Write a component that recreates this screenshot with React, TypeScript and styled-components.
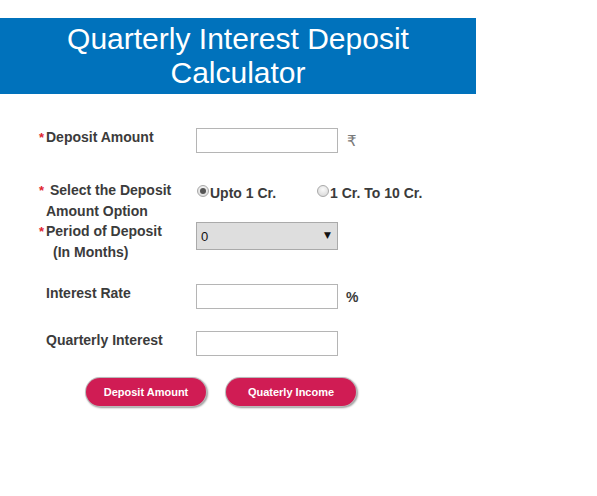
import styled, { createGlobalStyle } from "styled-components";

const GlobalStyle = createGlobalStyle`
  html, body {
    margin: 0;
    padding: 0;
    background: #fff;
    font-family: "Liberation Sans", Arial, sans-serif;
  }
`;

const Page = styled.div`
  width: 597px;
  height: 496px;
  padding-top: 18px;
  box-sizing: border-box;
`;

const Header = styled.h1`
  margin: 0;
  width: 476px;
  height: 76px;
  background: #0072bc;
  color: #fff;
  font-weight: normal;
  font-size: 30px;
  line-height: 34px;
  text-align: center;
  padding-top: 4px;
  box-sizing: border-box;
`;

const Form = styled.div`
  padding-left: 39px;
  padding-top: 34px;
  display: flex;
  flex-direction: column;
`;

const Row = styled.div<{ gap: number }>`
  display: flex;
  align-items: flex-start;
  margin-top: ${(p) => p.gap}px;
`;

const Label = styled.div`
  width: 157px;
  box-sizing: border-box;
  padding-left: 7px;
  font-size: 14px;
  font-weight: bold;
  line-height: 20px;
  color: #3b3b3b;
  margin-top: -1px;
`;

const Star = styled.span`
  display: inline-block;
  width: 7px;
  margin-left: -7px;
  color: #e0252e;
  font-size: 13px;
`;

const Indent = styled.span`
  padding-left: 7px;
`;

const Field = styled.input`
  width: 142px;
  height: 25px;
  box-sizing: border-box;
  border: 1px solid #b5b5b5;
  border-radius: 0;
  padding: 0 4px;
  margin: 0;
  font-family: inherit;
  font-size: 13px;
`;

const Unit = styled.span<{ bold?: boolean }>`
  margin-left: ${(p) => (p.bold ? 8 : 9)}px;
  margin-top: ${(p) => (p.bold ? 5 : 4)}px;
  font-weight: ${(p) => (p.bold ? "bold" : "normal")};
  color: ${(p) => (p.bold ? "#3b3b3b" : "#7a7a7a")};
  font-family: ${(p) =>
    p.bold ? '"Liberation Sans", Arial, sans-serif' : '"DejaVu Sans", sans-serif'};
  font-size: ${(p) => (p.bold ? 14 : 15)}px;
`;

const Options = styled.div`
  display: flex;
  padding-top: 3px;
`;

const Option = styled.label`
  width: 120px;
  display: flex;
  align-items: center;
  font-size: 14px;
  font-weight: bold;
  color: #3b3b3b;
  line-height: 18px;
`;

const Radio = styled.span<{ checked?: boolean }>`
  width: 12px;
  height: 12px;
  box-sizing: border-box;
  border-radius: 50%;
  border: 1px solid #a9a9a9;
  background: radial-gradient(circle at 50% 35%, #fafafa, #d4d4d4);
  margin-top: -4px;
  margin-left: 1px;
  margin-right: 1px;
  display: flex;
  align-items: center;
  justify-content: center;
  &::after {
    content: "";
    width: 6px;
    height: 6px;
    border-radius: 50%;
    background: ${(p) => (p.checked ? "#555" : "transparent")};
  }
`;

const SelectBox = styled.div`
  position: relative;
  width: 142px;
  height: 28px;
`;

const Select = styled.select`
  appearance: none;
  -webkit-appearance: none;
  width: 100%;
  height: 100%;
  box-sizing: border-box;
  border: 1px solid #aaa;
  border-radius: 0;
  background: #dedede;
  font-family: "Liberation Sans", Arial, sans-serif;
  font-size: 13px;
  color: #111;
  padding: 0 4px;
  margin: 0;
`;

const Arrow = styled.span`
  position: absolute;
  right: 7px;
  top: 8px;
  font-size: 9px;
  color: #111;
  pointer-events: none;
  font-family: "DejaVu Sans", sans-serif;
`;

const Buttons = styled.div`
  display: flex;
  gap: 20px;
  margin-top: 22px;
  padding-left: 47px;
`;

const Button = styled.button<{ w: number }>`
  width: ${(p) => p.w}px;
  height: 28px;
  border: none;
  border-radius: 14px;
  background: #d01c54;
  color: #fff;
  font-family: "Liberation Sans", Arial, sans-serif;
  font-weight: bold;
  font-size: 11px;
  box-shadow: 0 0 0 1px #b9b9b9, 1px 1px 2px 1px #999;
  cursor: pointer;
  padding: 0;
`;

export default function App() {
  return (
    <Page>
      <GlobalStyle />
      <Header>
        Quarterly Interest Deposit
        <br />
        Calculator
      </Header>
      <Form>
        <Row gap={0}>
          <Label>
            <Star>*</Star>Deposit Amount
          </Label>
          <Field />
          <Unit>₹</Unit>
        </Row>
        <Row gap={28}>
          <Label>
            <Star>*</Star> Select the Deposit Amount Option
          </Label>
          <Options>
            <Option>
              <Radio checked />
              Upto 1 Cr.
            </Option>
            <Option>
              <Radio />1 Cr. To 10 Cr.
            </Option>
          </Options>
        </Row>
        <Row gap={1}>
          <Label>
            <Star>*</Star>Period of Deposit
            <br />
            <Indent>(In Months)</Indent>
          </Label>
          <SelectBox>
            <Select defaultValue="0">
              <option value="0">0</option>
              <option value="3">3</option>
              <option value="6">6</option>
              <option value="12">12</option>
            </Select>
            <Arrow>▼</Arrow>
          </SelectBox>
        </Row>
        <Row gap={22}>
          <Label>Interest Rate</Label>
          <Field />
          <Unit bold>%</Unit>
        </Row>
        <Row gap={22}>
          <Label>Quarterly Interest</Label>
          <Field />
        </Row>
        <Buttons>
          <Button w={120}>Deposit Amount</Button>
          <Button w={130}>Quaterly Income</Button>
        </Buttons>
      </Form>
    </Page>
  );
}
